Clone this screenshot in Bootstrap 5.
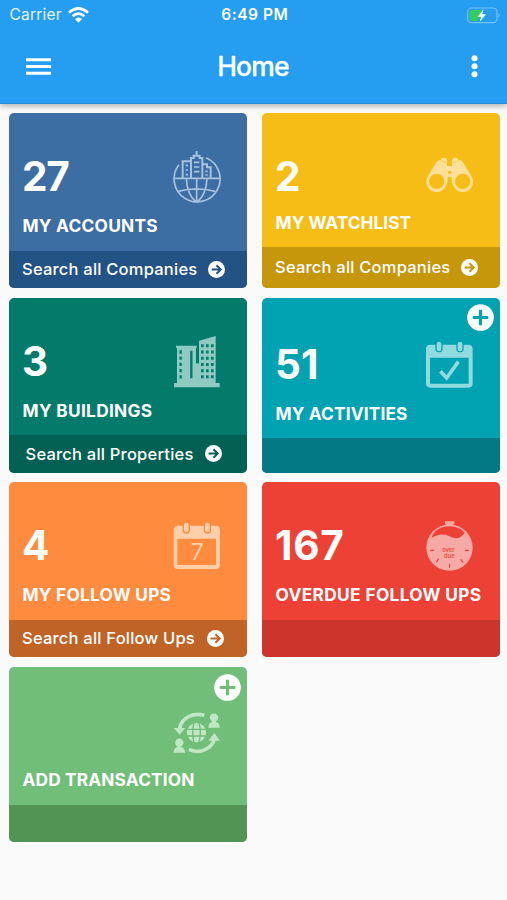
<!DOCTYPE html>
<html lang="en">
<head>
<meta charset="utf-8">
<meta name="viewport" content="width=device-width, initial-scale=1">
<title>Home</title>
<link href="https://cdn.jsdelivr.net/npm/bootstrap@5.3.0/dist/css/bootstrap.min.css" rel="stylesheet">
<style>
body{font-family:Inter,"Liberation Sans",sans-serif;background:#fafafa;color:#fff;min-height:900px;overflow-x:hidden}
.app-header{background:#259df1;height:103.5px;border-bottom:1px solid #218bd8;box-shadow:0 2px 6px rgba(0,0,0,.3)}
.status-bar{height:29px;padding:0 7px 0 9.5px;font-size:15.5px;line-height:30px;display:grid;grid-template-columns:1fr auto 1fr}
.carrier{letter-spacing:.2px;color:#e4f4ff}
.wifi{margin-left:6px}
.clock{font-weight:600;letter-spacing:.55px;font-size:15.5px}
.title-bar{height:74px;padding:0 29px 0 26px;display:grid;grid-template-columns:1fr auto 1fr}
.page-title{font-size:26.5px;font-weight:500;line-height:74px;letter-spacing:-.8px;padding-left:2px;-webkit-text-stroke:.3px #fff}
.tiles{padding:9.5px 7px 0 9px}
.tile-grid{display:grid;grid-template-columns:238px 238px;column-gap:15px;row-gap:9.7px}
.tile{height:175px;border:0;border-radius:5px;overflow:hidden;color:#fff;background:var(--tone)}
.tile-main{padding:0 20px 14.5px 13.5px}
.count{font-size:40.5px;font-weight:700;line-height:40px;margin-bottom:7px;margin-left:-.5px;letter-spacing:var(--num,0)}
.caption{font-size:17.3px;font-weight:700;line-height:20px;margin-top:12px;letter-spacing:var(--track,.25px);white-space:nowrap}
.tile-foot{height:var(--foot,37.4px);background:var(--shade);padding-left:13px;padding-right:22px;font-size:16.5px;letter-spacing:.22px;font-weight:500;white-space:nowrap}
.glyph{width:60px;height:60px;flex:none}
.plus{top:6.5px;right:6px}
.accounts{--tone:#3c6ea4;--shade:#235385;--num:-1.2px}
.watch{--tone:#f7bd17;--shade:#c6960b;--foot:40.6px;--track:.05px}
.watch .count{margin-bottom:4px}
.buildings{--tone:#037b6b;--shade:#036153;--track:.3px}
.buildings .tile-foot{padding-left:16.5px;padding-right:25.5px}
.activities{--tone:#01a2b2;--shade:#027985;--foot:34.6px;--track:.15px}
.follow{--tone:#ff8b3e;--shade:#bf6426}
.follow .tile-foot{padding-right:23px}
.overdue{--tone:#ee4136;--shade:#cc352b;--track:.35px;--num:.8px}
.transact{--tone:#70be77;--shade:#519454;--track:.15px}
</style>
<script src="https://cdn.jsdelivr.net/npm/bootstrap@5.3.0/dist/js/bootstrap.bundle.min.js"></script>
</head>
<body>
<svg width="0" height="0" class="position-absolute" aria-hidden="true">
  <symbol id="go" viewBox="0 0 52 52"><circle cx="26" cy="26" r="26" fill="#fff"/><path d="M11 26H38M26 13L39 26L26 39" fill="none" stroke="var(--shade)" stroke-width="6"/></symbol>
  <symbol id="add" viewBox="0 0 80 80"><circle cx="40" cy="40" r="39.5" fill="#fff"/><path d="M17 40H63M40 17V63" stroke="var(--tone)" stroke-width="9.5"/></symbol>
</svg>
<header class="app-header position-relative">
  <div class="status-bar">
    <div class="d-flex align-items-center"><span class="carrier">Carrier</span>
      <svg class="wifi" width="21" height="16" viewBox="0 0 63 48" fill="none" stroke="#fff" stroke-width="8"><path d="M3 17Q31 -8 60 17M14 28Q31 12 49 28"/><path d="M21 36Q31 27 42 36L31.500 47Z" fill="#fff" stroke="none"/></svg>
    </div>
    <span class="clock">6:49 PM</span>
    <div class="d-flex align-items-center justify-content-end">
      <svg width="33" height="17" viewBox="0 0 99 51"><rect x="2" y="3" width="88" height="44" rx="12" fill="none" stroke="#77c2f7" stroke-width="3.500"/><path d="M94 18Q102 25 94 32Z" fill="#77c2f7"/><path d="M14 9H46L32 42H14Q8 42 8 36V15Q8 9 14 9Z" fill="#34cd5b"/><path d="M50 6L32 29H42L38 45L57 22H46Z" fill="#fff"/></svg>
    </div>
  </div>
  <div class="title-bar">
    <div class="d-flex align-items-center">
      <svg width="25" height="17" viewBox="0 0 75 51"><path d="M0 5H75M0 25.500H75M0 46H75" stroke="#fff" stroke-width="9"/></svg>
    </div>
    <h1 class="page-title m-0">Home</h1>
    <div class="d-flex align-items-center justify-content-end">
      <svg width="7" height="23" viewBox="0 0 21 69" fill="#fff"><circle cx="10.500" cy="10" r="9"/><circle cx="10.500" cy="34" r="9"/><circle cx="10.500" cy="58" r="9"/></svg>
    </div>
  </div>
</header>

<main class="tiles"><div class="tile-grid">

  <section class="card tile accounts">
    <div class="tile-main d-flex flex-column justify-content-end flex-fill">
      <div class="d-flex justify-content-between align-items-end"><span class="count">27</span>
        <svg class="glyph" viewBox="501 116 180 180" fill="none" stroke="#a5c3df" stroke-width="5">
          <path d="M537 178A69 69 0 1 0 618 157M521 219H659"/>
          <path d="M548 218V168H571M573 218V158H581V151H599V158H607V218M590 151V137M609 177H621V186H632V218" stroke-width="6"/>
          <path d="M557 180H564M557 194H564M557 208H564M582 171H598M582 185H598M582 199H598M616 198H623M616 209H623"/>
          <path d="M590 219V291M559 219Q561 268 588 290M621 219Q619 268 592 290M534 258Q590 243 646 258"/>
        </svg></div>
      <div class="caption">MY ACCOUNTS</div>
    </div>
    <div class="tile-foot d-flex align-items-center"><span>Search all Companies</span><svg class="ms-auto" width="17" height="17"><use href="#go"/></svg></div>
  </section>

  <section class="card tile watch">
    <div class="tile-main d-flex flex-column justify-content-end flex-fill">
      <div class="d-flex justify-content-between align-items-end"><span class="count">2</span>
        <svg class="glyph" viewBox="498 107 180 180" fill="#fce09a">
          <path fill-rule="evenodd" d="M517 227Q518 214 528 202L547 171Q552 164 560 164Q562 157 569 157Q579 158 579 166V182H594V166Q595 158 604 157Q612 157 614 164Q622 164 627 171L646 202Q656 214 657 227A31 31 0 0 1 597 240Q593 232 593 217Q587 211 581 217Q581 232 577 240A31 31 0 0 1 517 227ZM548 205A23 23 0 1 0 548 251A23 23 0 1 0 548 205ZM626 205A23 23 0 1 0 626 251A23 23 0 1 0 626 205Z"/>
          <circle cx="587" cy="201" r="5" fill="#f7bd17"/><path d="M560 166L577 172M614 166L597 172" stroke="#f9cb50" stroke-width="3"/>
        </svg></div>
      <div class="caption">MY WATCHLIST</div>
    </div>
    <div class="tile-foot d-flex align-items-center"><span>Search all Companies</span><svg class="ms-auto" width="17" height="17"><use href="#go"/></svg></div>
  </section>

  <section class="card tile buildings">
    <div class="tile-main d-flex flex-column justify-content-end flex-fill">
      <div class="d-flex justify-content-between align-items-end"><span class="count">3</span>
        <svg class="glyph" viewBox="501 115 180 180" fill="#8fcac2">
          <path d="M522 277H531V172H528V165H590V172H588V218H597V150L647 136V277H659V290H522Z"/>
          <path d="M574 180V263" stroke="#037b6b" stroke-width="7"/>
          <path d="M592 172V218" stroke="#037b6b" stroke-width="7"/>
          <path d="M542 179V264" stroke="#037b6b" stroke-width="7" stroke-dasharray="10 8.600"/>
          <path d="M607 161V264M622 161V264M637 161V264" stroke="#037b6b" stroke-width="8" stroke-dasharray="9 9.600"/>
        </svg></div>
      <div class="caption">MY BUILDINGS</div>
    </div>
    <div class="tile-foot d-flex align-items-center"><span>Search all Properties</span><svg class="ms-auto" width="17" height="17"><use href="#go"/></svg></div>
  </section>

  <section class="card tile activities">
    <svg class="plus position-absolute" width="27" height="27"><use href="#add"/></svg>
    <div class="tile-main d-flex flex-column justify-content-end flex-fill">
      <div class="d-flex justify-content-between align-items-end"><span class="count">51</span>
        <svg class="glyph" viewBox="498 124 180 180">
          <path fill="#91dae0" fill-rule="evenodd" d="M529 162H643Q656 162 656 175V278Q656 291 643 291H529Q516 291 516 278V175Q516 162 529 162ZM528 201V279H644V201Z"/>
          <path d="M555 160V174M618 160V174" stroke="#01a2b2" stroke-width="22" stroke-linecap="round"/><path d="M555 160V175M618 160V175" stroke="#91dae0" stroke-width="14" stroke-linecap="round"/>
          <path d="M559 242L578 262L613 213" fill="none" stroke="#91dae0" stroke-width="11"/>
        </svg></div>
      <div class="caption">MY ACTIVITIES</div>
    </div>
    <div class="tile-foot"></div>
  </section>

  <section class="card tile follow">
    <div class="tile-main d-flex flex-column justify-content-end flex-fill">
      <div class="d-flex justify-content-between align-items-end"><span class="count">4</span>
        <svg class="glyph" viewBox="501 115 180 180">
          <path fill="#ffceaa" fill-rule="evenodd" d="M534 153H647Q660 153 660 166V270Q660 283 647 283H534Q521 283 521 270V166Q521 153 534 153ZM532 192V271H648V192Z"/>
          <path d="M559 151V166M622 151V166" stroke="#ff8b3e" stroke-width="22" stroke-linecap="round"/><path d="M559 151V166M622 151V166" stroke="#ffceaa" stroke-width="14" stroke-linecap="round"/>
          <text x="592" y="256" text-anchor="middle" font-family="Inter,sans-serif" font-size="69" fill="#ffceaa">7</text>
        </svg></div>
      <div class="caption">MY FOLLOW UPS</div>
    </div>
    <div class="tile-foot d-flex align-items-center"><span>Search all Follow Ups</span><svg class="ms-auto" width="17" height="17"><use href="#go"/></svg></div>
  </section>

  <section class="card tile overdue">
    <div class="tile-main d-flex flex-column justify-content-end flex-fill">
      <div class="d-flex justify-content-between align-items-end"><span class="count">167</span>
        <svg class="glyph" viewBox="498 115 180 180">
          <path d="M573 140H601V149H597V154H577V149H573Z" fill="#f7aaa5"/>
          <circle cx="586.500" cy="219" r="69.500" fill="#f7aaa5"/>
          <path d="M532 190Q545 155 586 155Q618 155 632 175Q621 191 605 191Q594 190 585 184Q562 173 532 190Z" fill="#ee4136"/>
          <path d="M528 227H541M632 227H645M587 267V279M554 252L547 263M620 254L628 264" stroke="#ee4136" stroke-width="3.500"/>
          <text text-anchor="middle" font-family="Inter,sans-serif" font-weight="700" font-size="17" fill="#e8554c"><tspan x="583" y="231">over</tspan><tspan x="586" y="251">due</tspan></text>
        </svg></div>
      <div class="caption">OVERDUE FOLLOW UPS</div>
    </div>
    <div class="tile-foot"></div>
  </section>

  <section class="card tile transact">
    <svg class="plus position-absolute" width="27" height="27"><use href="#add"/></svg>
    <div class="tile-main d-flex flex-column justify-content-end flex-fill">
      <div class="d-flex justify-content-end align-items-end">
        <svg class="glyph" viewBox="501 112 180 180" fill="#c0e6c2">
          <path d="M613 164Q588 157 567 167Q543 179 539 203M567 266Q592 278 615 267Q638 256 643 236" fill="none" stroke="#c0e6c2" stroke-width="11"/>
          <path d="M521 202H556L539 222ZM625 240H660L643 217Z"/>
          <circle cx="589.500" cy="216" r="29"/>
          <path d="M560 206H619M560 226H619M582 187Q574 216 582 245M597 187Q605 216 597 245" fill="none" stroke="#70be77" stroke-width="4"/>
          <circle cx="642" cy="171" r="12.500"/><path d="M637 178H647V184Q659 186 659 201H625Q625 186 637 184Z"/>
          <circle cx="538" cy="246" r="12.500"/><path d="M533 253H543V259Q555 261 555 276H521Q521 261 533 259Z"/>
        </svg></div>
      <div class="caption">ADD TRANSACTION</div>
    </div>
    <div class="tile-foot"></div>
  </section>

</div></main>
</body>
</html>
